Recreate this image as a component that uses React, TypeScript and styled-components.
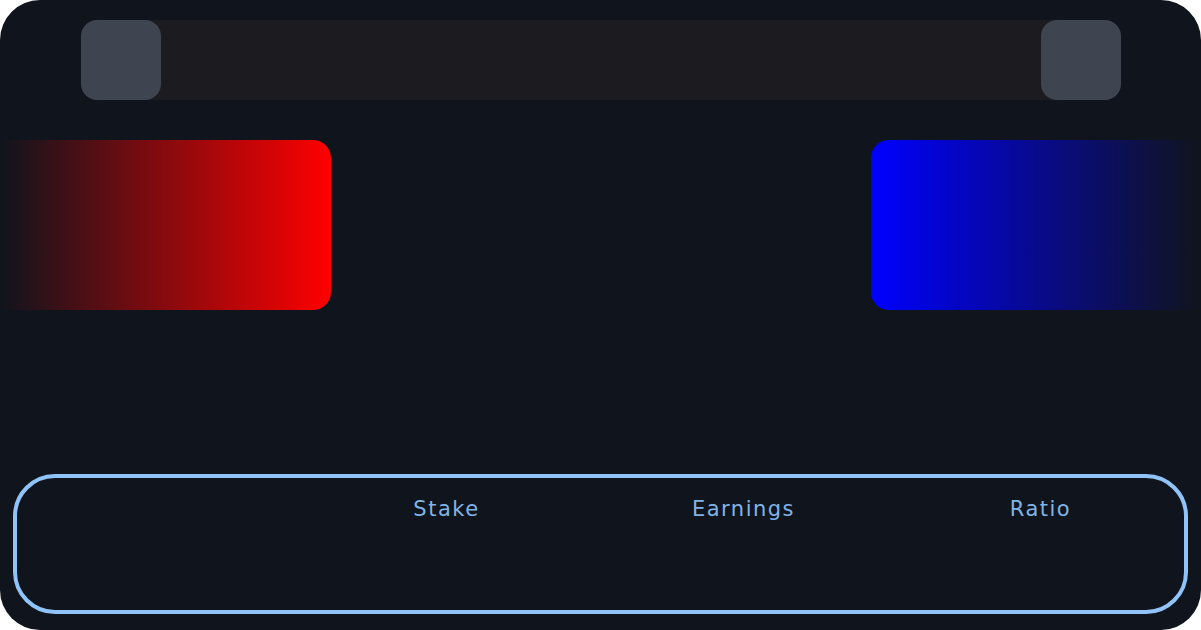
import styled, { createGlobalStyle } from 'styled-components';

const GlobalStyle = createGlobalStyle`
  html, body {
    margin: 0;
    padding: 0;
    background: #ffffff;
  }
`;

const columns = ['', 'Stake', 'Earnings', 'Ratio'];

function App() {
  return (
    <>
      <GlobalStyle />
      <Frame>
        <TopBar>
          <SquareButton />
          <SquareButton />
        </TopBar>
        <CardRow>
          <Card side="left" />
          <Card side="right" />
        </CardRow>
        <StatsBox>
          {columns.map((label, key) => (
            <Heading key={key}>{label}</Heading>
          ))}
        </StatsBox>
      </Frame>
    </>
  );
}

export default App;

const Frame = styled.div`
  width: 1201px;
  height: 630px;
  box-sizing: border-box;
  background: #10141c;
  border-radius: 40px;
  overflow: hidden;
  display: flex;
  flex-direction: column;
`;

const TopBar = styled.div`
  margin: 20px 80px 0 81px;
  height: 80px;
  background: #1c1c20;
  border-radius: 16px;
  display: flex;
  justify-content: space-between;
`;

const SquareButton = styled.div`
  width: 80px;
  height: 80px;
  background: #3e4450;
  border-radius: 16px;
`;

const CardRow = styled.div`
  margin-top: 40px;
  height: 170px;
  display: flex;
  justify-content: space-between;
`;

const Card = styled.div<{ side: 'left' | 'right' }>`
  width: ${({ side }) => (side === 'left' ? '331px' : '330px')};
  height: 170px;
  border-radius: ${({ side }) => (side === 'left' ? '0 18px 18px 0' : '18px 0 0 18px')};
  background: ${({ side }) =>
    side === 'left'
      ? 'linear-gradient(to right, #10141c 0%, #ff0000 100%)'
      : 'linear-gradient(to right, #0000ff 0%, #10141c 100%)'};
`;

const StatsBox = styled.div`
  margin: auto 13px 16px 13px;
  height: 140px;
  box-sizing: border-box;
  border: 4px solid #90c4f8;
  border-radius: 42px;
  padding-top: 18px;
  display: grid;
  grid-template-columns: 281px repeat(3, 297px);
  align-content: start;
`;

const Heading = styled.div`
  text-align: center;
  font-family: 'DejaVu Sans', sans-serif;
  font-size: 21px;
  line-height: 26px;
  letter-spacing: 1.5px;
  color: #80b4e8;
`;
